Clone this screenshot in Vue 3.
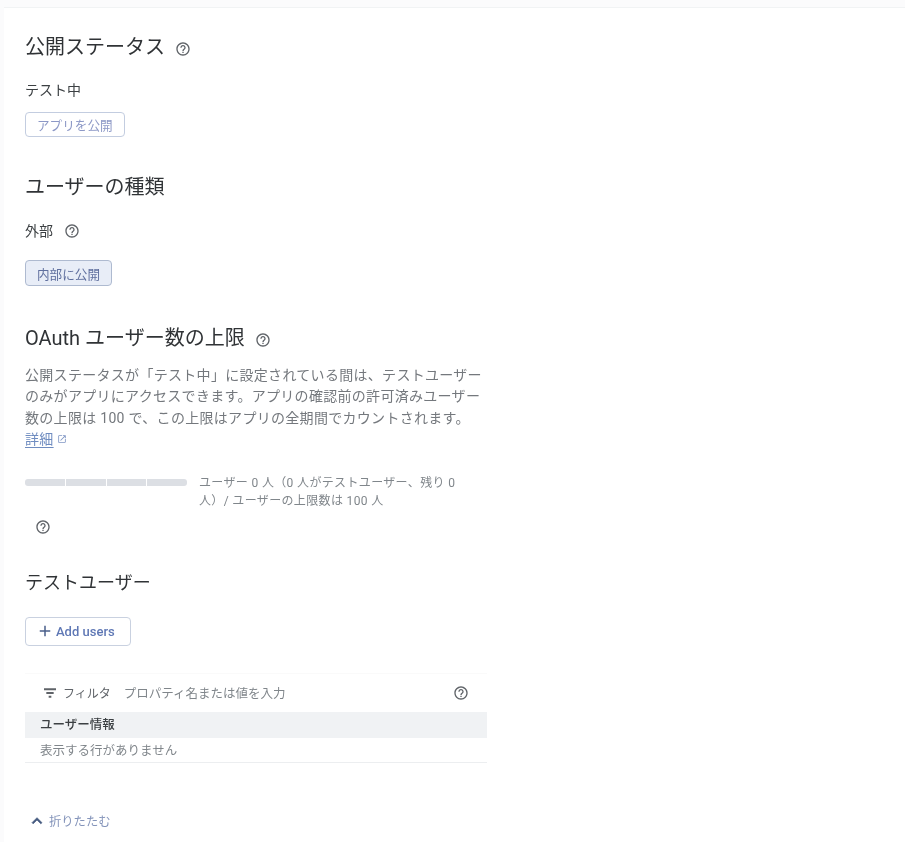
<script setup>
const helpPath = 'M11 18h2v-2h-2v2zm1-16C6.48 2 2 6.48 2 12s4.48 10 10 10 10-4.48 10-10S17.52 2 12 2zm0 18c-4.41 0-8-3.59-8-8s3.59-8 8-8 8 3.59 8 8-3.59 8-8 8zm0-14c-2.21 0-4 1.79-4 4h2c0-1.1.9-2 2-2s2 .9 2 2c0 2-3 1.75-3 5h2c0-2.25 3-2.5 3-5 0-2.21-1.79-4-4-4z'
</script>

<template>
  <div class="page">
    <main class="content">
      <section class="status">
        <h2>公開ステータス <svg class="help" viewBox="0 0 24 24"><path :d="helpPath" /></svg></h2>
        <p class="label">テスト中</p>
        <button class="btn outline">アプリを公開</button>
      </section>

      <section class="kind">
        <h2>ユーザーの種類</h2>
        <p class="label">外部 <svg class="help" viewBox="0 0 24 24"><path :d="helpPath" /></svg></p>
        <button class="btn filled">内部に公開</button>
      </section>

      <section class="cap">
        <h2>OAuth ユーザー数の上限 <svg class="help" viewBox="0 0 24 24"><path :d="helpPath" /></svg></h2>
        <p class="desc">
          公開ステータスが「テスト中」に設定されている間は、テストユーザーのみがアプリにアクセスできます。アプリの確認前の許可済みユーザー数の上限は 100 で、この上限はアプリの全期間でカウントされます。<br>
          <a class="link">詳細</a>
          <svg class="ext" viewBox="0 0 24 24"><path d="M19 19H5V5h7V3H5a2 2 0 0 0-2 2v14a2 2 0 0 0 2 2h14c1.1 0 2-.9 2-2v-7h-2v7zM14 3v2h3.59l-9.83 9.83 1.41 1.41L19 6.41V10h2V3h-7z" /></svg>
        </p>
        <div class="usage">
          <div class="bar"><span></span><span></span><span></span><span></span></div>
          <p>ユーザー 0 人（0 人がテストユーザー、残り 0 人）/ ユーザーの上限数は 100 人</p>
        </div>
        <svg class="help usage-help" viewBox="0 0 24 24"><path :d="helpPath" /></svg>
      </section>

      <section class="testers">
        <h2>テストユーザー</h2>
        <button class="btn add">
          <svg viewBox="0 0 24 24"><path d="M19 13h-6v6h-2v-6H5v-2h6V5h2v6h6v2z" /></svg>
          Add users
        </button>
        <div class="table">
          <div class="filter">
            <svg class="filter-icon" viewBox="0 0 24 24"><path d="M3 5h18v2.800H3zM6.500 10.600h11v2.800h-11zM10 16.200h4v2.800h-4z" /></svg>
            <span class="filter-name">フィルタ</span>
            <span class="filter-hint">プロパティ名または値を入力</span>
            <svg class="help" viewBox="0 0 24 24"><path :d="helpPath" /></svg>
          </div>
          <div class="thead">ユーザー情報</div>
          <div class="empty">表示する行がありません</div>
        </div>
      </section>

      <a class="collapse">
        <svg viewBox="0 0 24 24"><path d="M7.41 15.41 12 10.83l4.59 4.58L18 14l-6-6-6 6z" /></svg>
        折りたたむ
      </a>
    </main>
  </div>
</template>

<style scoped>
.page {
  width: 905px;
  height: 842px;
  overflow: hidden;
  box-sizing: border-box;
  background: #fbfbfc;
  padding-left: 4px;
  font-family: "Roboto", "Noto Sans CJK JP", sans-serif;
  color: #3c4043;
}

.content {
  height: 100%;
  box-sizing: border-box;
  border-top: 1px solid #f1f3f4;
  margin-top: 7px;
  padding: 25px 0 0 21px;
  background: #fff;
  filter: blur(.35px);
}

h2 {
  margin: 0;
  font-size: 20px;
  line-height: 28px;
  font-weight: 400;
  color: #303336;
  display: flex;
  align-items: center;
  gap: 10px;
}

.help {
  width: 16px;
  height: 16px;
  flex: none;
  fill: #5f6368;
}

h2 .help {
  margin-top: 4px;
}

.label {
  margin: 19px 0 0;
  font-size: 14px;
  line-height: 20px;
  display: flex;
  align-items: center;
  gap: 11px;
}

.btn {
  display: flex;
  align-items: center;
  box-sizing: border-box;
  border-radius: 4px;
  font-family: inherit;
  font-size: 12.6px;
  font-weight: 400;
  padding: 0 11px;
  height: 25px;
  margin-top: 12px;
}

.outline {
  background: #fff;
  border: 1px solid #c3cde0;
  color: #8c98c6;
}

.filled {
  height: 26px;
  background: #e8edf7;
  border: 1px solid #aebad0;
  color: #5f6f9e;
}

.kind {
  margin-top: 36px;
}

.kind .label {
  margin-top: 20px;
}

.kind .btn {
  margin-top: 19px;
}

.cap {
  margin-top: 38px;
  width: 462px;
}

.desc {
  margin: 13px 0 0;
  font-size: 14px;
  line-height: 21.4px;
  letter-spacing: .3px;
  color: #74787d;
}

.link {
  color: #6f8cc0;
  text-decoration: underline;
  text-underline-offset: 3px;
}

.ext {
  width: 10px;
  height: 10px;
  fill: #7f95c4;
  margin-left: 3px;
}

.usage {
  margin-top: 23px;
  display: flex;
  gap: 12px;
}

.bar {
  flex: none;
  width: 162px;
  height: 7px;
  margin-top: 5px;
  display: grid;
  grid-template-columns: repeat(4, 1fr);
  gap: 1px;
}

.bar span {
  background: #dcdfe4;
}

.bar span:first-child {
  border-radius: 3px 0 0 3px;
}

.bar span:last-child {
  border-radius: 0 3px 3px 0;
}

.usage p {
  margin: 0;
  width: 268px;
  font-size: 12px;
  line-height: 18.500px;
  letter-spacing: .35px;
  color: #80868b;
}

.usage-help {
  display: block;
  margin: 8px 0 0 10px;
}

.testers {
  margin-top: 34px;
  width: 462px;
}

.testers h2 {
  font-size: 18px;
}

.add {
  margin-top: 20px;
  height: 29px;
  width: 106px;
  padding: 0 0 0 10px;
  gap: 2px;
  font-size: 13px;
  font-weight: 500;
  background: #fff;
  border: 1px solid #c9d1e0;
  color: #5f78b5;
}

.add svg {
  width: 18px;
  height: 18px;
  fill: #4a5f8a;
}

.table {
  margin-top: 27px;
  border-top: 1px solid #fafafa;
}

.filter {
  height: 38px;
  padding: 0 18px 0 17px;
  display: flex;
  align-items: center;
  font-size: 12.5px;
}

.filter-icon {
  width: 16px;
  height: 16px;
  fill: #5f6368;
  margin-right: 5px;
}

.filter-name {
  color: #5f6368;
  font-size: 12px;
  margin-right: 13px;
}

.filter-hint {
  flex: 1;
  color: #80868b;
}

.thead {
  height: 26px;
  line-height: 26px;
  padding-left: 15px;
  background: #f0f2f4;
  font-size: 12.5px;
  font-weight: 500;
  color: #3c4043;
}

.empty {
  height: 24px;
  line-height: 25px;
  padding-left: 15px;
  font-size: 12.5px;
  color: #80868b;
  border-bottom: 1px solid #eceef0;
}

.collapse {
  margin-top: 48px;
  display: flex;
  align-items: center;
  gap: 2px;
  margin-left: 2px;
  font-size: 12.3px;
  color: #8494ba;
}

.collapse svg {
  width: 20px;
  height: 20px;
  fill: #44597f;
  stroke: #44597f;
  stroke-width: .8;
}
</style>
